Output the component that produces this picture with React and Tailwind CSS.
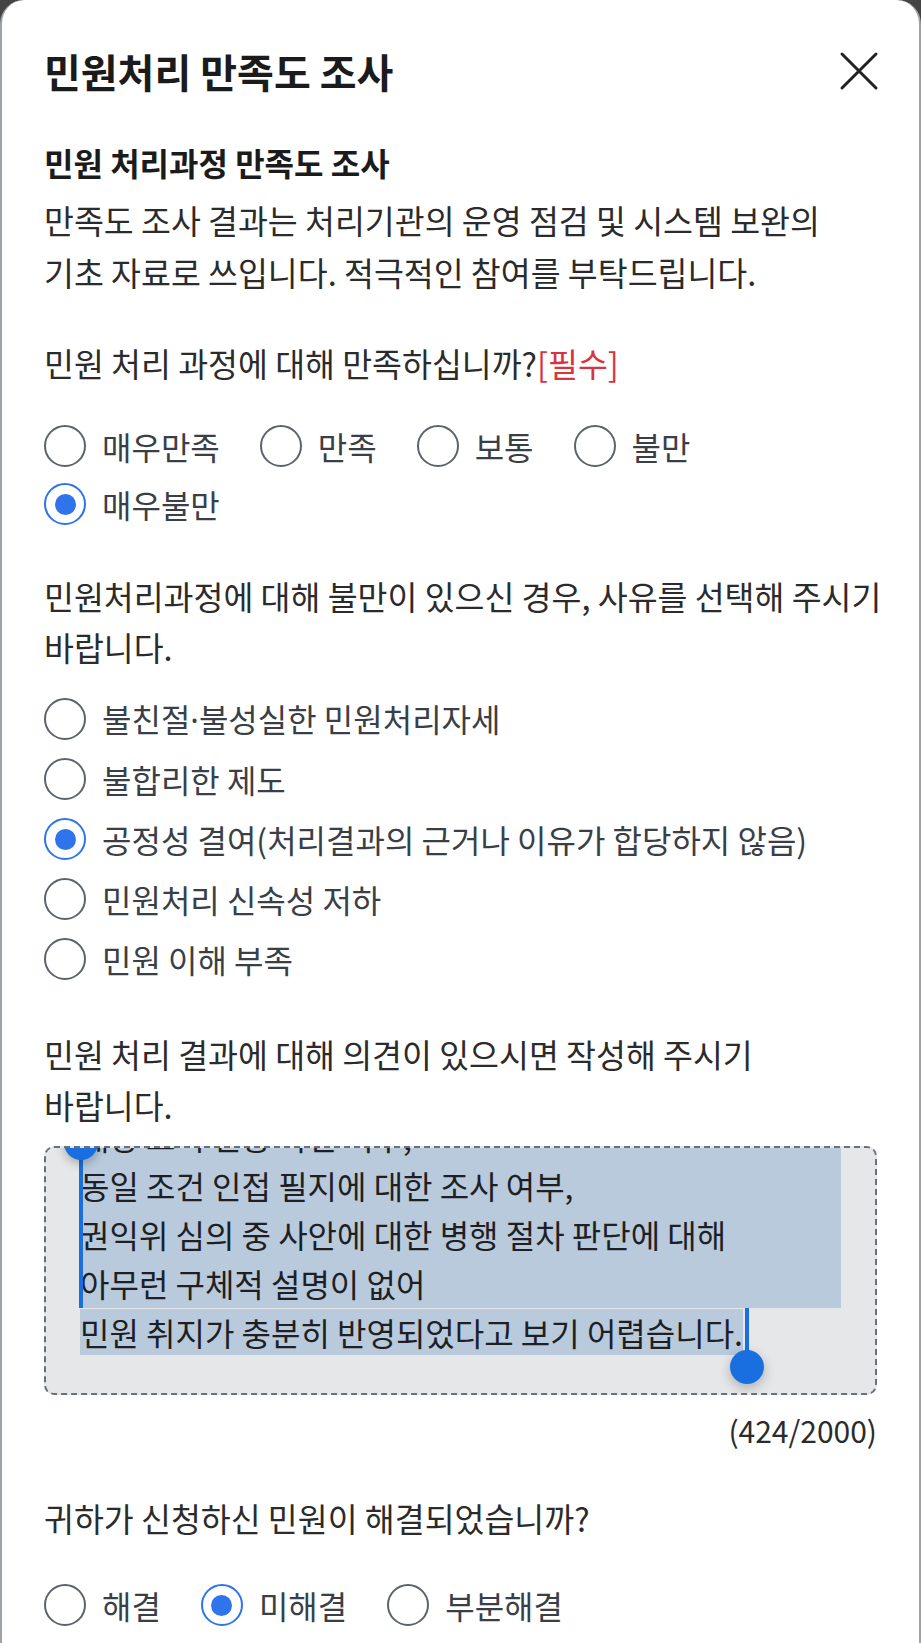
import React from "react";

const font = { fontFamily: '"Noto Sans CJK KR", "Noto Sans", sans-serif' };

function Radio({ label, checked }) {
  return (
    <div className="flex h-[44px] items-center gap-[16px]">
      <span
        className={`flex h-[42px] w-[42px] shrink-0 items-center justify-center rounded-full border-2 ${
          checked ? "border-[#2f74eb]" : "border-[#5c636c]"
        }`}
      >
        {checked && <span className="h-[21px] w-[21px] rounded-full bg-[#2f74eb]" />}
      </span>
      <span className="whitespace-nowrap text-[32px] leading-[44px] text-[#3a3f47]">{label}</span>
    </div>
  );
}

export default function App() {
  const lines = [
    "해당 토지 현황 확인 여부,",
    "동일 조건 인접 필지에 대한 조사 여부,",
    "권익위 심의 중 사안에 대한 병행 절차 판단에 대해",
    "아무런 구체적 설명이 없어",
  ];

  return (
    <div className="h-[1643px] overflow-hidden bg-[#444]" style={font}>
      <div className="h-full rounded-t-[24px] border-x-2 border-[#9ea3a9] bg-white px-[42px] text-[#222]">
        {/* header */}
        <div className="flex items-center justify-between pt-[48px]">
          <h1 className="text-[40px] font-bold leading-[46px] text-[#1b1b1b]">민원처리 만족도 조사</h1>
          <button className="mr-[-2px] flex h-[40px] w-[40px] items-center justify-center">
            <svg width="40" height="40" viewBox="0 0 40 40" fill="none" stroke="#222" strokeWidth="3" strokeLinecap="round">
              <path d="M3 3 L37 37 M37 3 L3 37" />
            </svg>
          </button>
        </div>

        <h2 className="mt-[46px] text-[32px] font-bold leading-[44px] text-[#1b1b1b]">민원 처리과정 만족도 조사</h2>
        <p className="mt-[10px] whitespace-nowrap text-[32.5px] leading-[52px] text-[#2b2b2b]">
          만족도 조사 결과는 처리기관의 운영 점검 및 시스템 보완의
          <br />
          기초 자료로 쓰입니다. 적극적인 참여를 부탁드립니다.
        </p>

        {/* Q1 */}
        <p className="mt-[39px] text-[32.5px] leading-[52px] text-[#2b2b2b]">
          민원 처리 과정에 대해 만족하십니까?<span className="text-[#d8343f]">[필수]</span>
        </p>
        <div className="mt-[35px] flex flex-wrap gap-x-[40px] gap-y-[14px]">
          <Radio label="매우만족" />
          <Radio label="만족" />
          <Radio label="보통" />
          <Radio label="불만" />
          <Radio label="매우불만" checked />
        </div>

        {/* Q2 */}
        <p className="mt-[44px] whitespace-nowrap text-[32.5px] leading-[51px] text-[#2b2b2b]">
          민원처리과정에 대해 불만이 있으신 경우, 사유를 선택해 주시기
          <br />
          바랍니다.
        </p>
        <div className="mt-[25px] flex flex-col gap-[16px]">
          <Radio
            label={
              <>
                불친절<span style={{ fontFamily: '"Noto Sans", sans-serif' }}>·</span>불성실한 민원처리자세
              </>
            }
          />
          <Radio label="불합리한 제도" />
          <Radio label="공정성 결여(처리결과의 근거나 이유가 합당하지 않음)" checked />
          <Radio label="민원처리 신속성 저하" />
          <Radio label="민원 이해 부족" />
        </div>

        {/* Q3 */}
        <p className="mt-[47px] whitespace-nowrap text-[32.5px] leading-[51px] text-[#2b2b2b]">
          민원 처리 결과에 대해 의견이 있으시면 작성해 주시기
          <br />
          바랍니다.
        </p>
        <div className="relative mt-[16px] h-[249px] overflow-hidden rounded-[10px] border-2 border-dashed border-[#6b7078] bg-[#e6e7e9]">
          <div className="mt-[-36px] px-[34px] text-[32px] leading-[49px] text-[#1d1f24]">
            <div className="bg-[#b8cadc]">
              {lines.map((l) => (
                <div key={l} className="whitespace-nowrap">{l}</div>
              ))}
            </div>
            <div className="whitespace-nowrap">
              <span className="bg-[#b8cadc]">민원 취지가 충분히 반영되었다고 보기 어렵습니다.</span>
            </div>
          </div>
          {/* selection handles */}
          <div className="absolute left-[33px] top-0 h-[160px] w-[4px] bg-[#1a6fe0]" />
          <div className="absolute left-[18px] top-[-22px] h-[34px] w-[34px] rounded-full bg-[#1a6fe0] shadow-[0_4px_10px_rgba(0,0,0,0.25)]" />
          <div className="absolute left-[699px] top-[160px] h-[44px] w-[4px] bg-[#1a6fe0]" />
          <div className="absolute left-[684px] top-[202px] h-[34px] w-[34px] rounded-full bg-[#1a6fe0] shadow-[0_4px_12px_rgba(0,0,0,0.25)]" />
        </div>
        <p className="mt-[15px] text-right text-[30px] leading-[40px] text-[#2b2b2b]">(424/2000)</p>

        {/* Q4 */}
        <p className="mt-[42px] text-[32.5px] leading-[51px] text-[#2b2b2b]">귀하가 신청하신 민원이 해결되었습니까?</p>
        <div className="mt-[40px] flex flex-wrap gap-x-[40px]">
          <Radio label="해결" />
          <Radio label="미해결" checked />
          <Radio label="부분해결" />
        </div>
      </div>
    </div>
  );
}
